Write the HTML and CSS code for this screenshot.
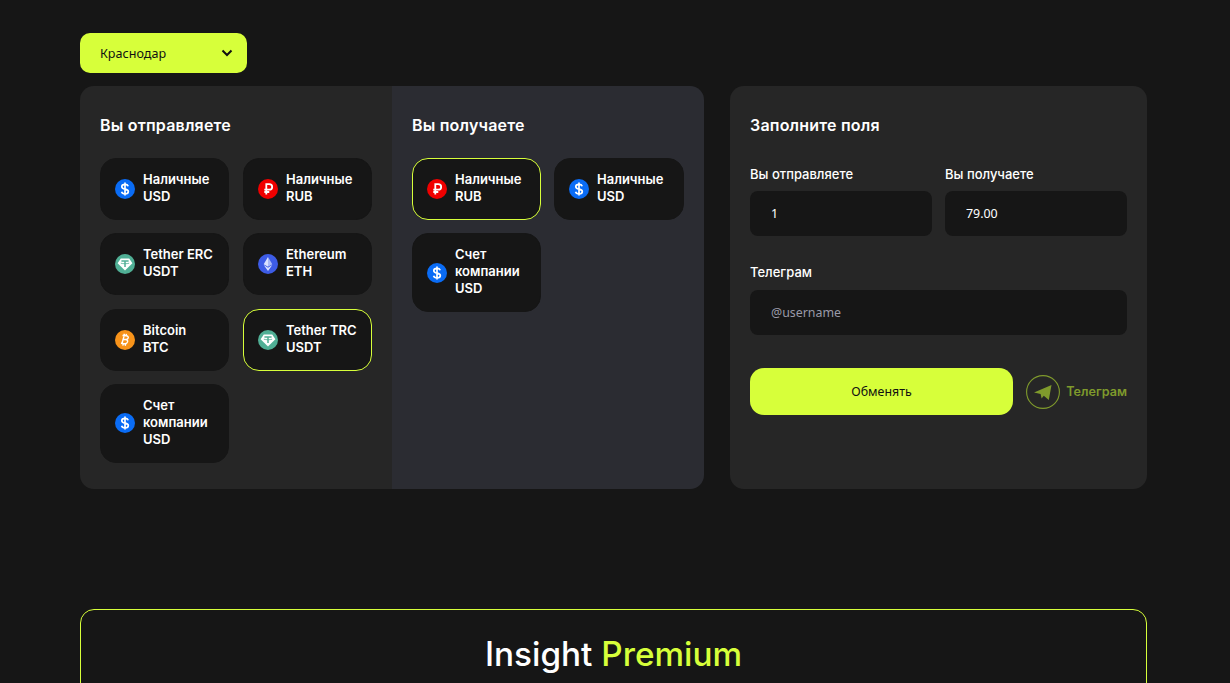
FILE: index.html
```html
<!DOCTYPE html>
<html>
<head>
    <meta charset="UTF-8" />
    <title>Обмен</title>
    <link rel="stylesheet" href="styles.css">
</head>
<body>
    <svg class="defs" width="0" height="0">
        <symbol id="i-usd" viewBox="0 0 20 20">
            <circle cx="10" cy="10" r="10" fill="#0a6cf5"/>
            <path d="M13.2 7.2C12.8 6 11.6 5.3 10 5.3c-1.900 0-3.200 1-3.200 2.400 0 3.300 6.500 1.500 6.500 4.700 0 1.400-1.400 2.400-3.300 2.400-1.700 0-3-.8-3.400-2.100M10 3.400v13.200" fill="none" stroke="#fff" stroke-width="1.700"/>
        </symbol>
        <symbol id="i-rub" viewBox="0 0 20 20">
            <circle cx="10" cy="10" r="10" fill="#f00000"/>
            <path d="M8.300 15.500V5.200h2.900c1.800 0 3 1.100 3 2.700s-1.200 2.800-3 2.800H6.300M6.300 13h5" fill="none" stroke="#fff" stroke-width="1.800"/>
        </symbol>
        <symbol id="i-usdt" viewBox="0 0 20 20">
            <circle cx="10" cy="10" r="10" fill="#50af95"/>
            <path d="M5.800 4.600h8.400l3.200 4.600L10 16.600 2.600 9.200z" fill="#fff"/>
            <path d="M6.400 6.900h7.200M10 6.900v6" fill="none" stroke="#50af95" stroke-width="1.500"/>
            <path d="M5.800 9.200c2.400.7 6 .7 8.400 0" fill="none" stroke="#50af95" stroke-width=".8"/>
        </symbol>
        <symbol id="i-eth" viewBox="0 0 20 20">
            <circle cx="10" cy="10" r="10" fill="#3d5ce6"/>
            <path d="M10 3l-4.300 7.200L10 12.800z" fill="#dbe3ff"/>
            <path d="M10 3l4.300 7.200L10 12.800z" fill="#a9baf7"/>
            <path d="M5.700 11.100L10 17l4.300-5.900L10 13.700z" fill="#dbe3ff"/>
        </symbol>
        <symbol id="i-btc" viewBox="0 0 20 20">
            <circle cx="10" cy="10" r="10" fill="#f7931a"/>
            <path d="M7.200 5.700h3.700c1.500 0 2.400.8 2.200 2-.2 1.100-1 1.800-2.500 1.800H7.600m2.800 0c1.700 0 2.600.9 2.300 2.200-.3 1.300-1.300 2-2.900 2H6.200M8.900 5.700l-1.700 8M9 3.800l-.4 1.900m2.400-1.900l-.4 1.900m-2 8l-.4 2m2.800-2l-.4 2" fill="none" stroke="#fff" stroke-width="1.400" transform="rotate(4 10 10)"/>
        </symbol>
    </svg>

    <div class="wrap">
        <div class="city">
            <span>Краснодар</span>
            <svg class="city-arrow" width="12" height="8" viewBox="0 0 12 8"><path d="M1.500 1.500L6 6l4.500-4.500" fill="none" stroke="#111" stroke-width="2"/></svg>
        </div>

        <div class="row">
            <div class="pairs">
                <div class="pane">
                    <h3>Вы отправляете</h3>
                    <div class="items">
                        <div class="item"><svg class="ico"><use href="#i-usd"/></svg><span>Наличные<br>USD</span></div>
                        <div class="item"><svg class="ico"><use href="#i-rub"/></svg><span>Наличные<br>RUB</span></div>
                        <div class="item"><svg class="ico"><use href="#i-usdt"/></svg><span>Tether ERC<br>USDT</span></div>
                        <div class="item"><svg class="ico"><use href="#i-eth"/></svg><span>Ethereum<br>ETH</span></div>
                        <div class="item"><svg class="ico"><use href="#i-btc"/></svg><span>Bitcoin<br>BTC</span></div>
                        <div class="item active"><svg class="ico"><use href="#i-usdt"/></svg><span>Tether TRC<br>USDT</span></div>
                        <div class="item"><svg class="ico"><use href="#i-usd"/></svg><span>Счет<br>компании<br>USD</span></div>
                    </div>
                </div>
                <div class="pane pane-right">
                    <h3>Вы получаете</h3>
                    <div class="items">
                        <div class="item active"><svg class="ico"><use href="#i-rub"/></svg><span>Наличные<br>RUB</span></div>
                        <div class="item"><svg class="ico"><use href="#i-usd"/></svg><span>Наличные<br>USD</span></div>
                        <div class="item"><svg class="ico"><use href="#i-usd"/></svg><span>Счет<br>компании<br>USD</span></div>
                    </div>
                </div>
            </div>

            <div class="form">
                <h3>Заполните поля</h3>
                <div class="fields">
                    <div class="field">
                        <label>Вы отправляете</label>
                        <input type="text" value="1">
                    </div>
                    <div class="field">
                        <label>Вы получаете</label>
                        <input type="text" value="79.00">
                    </div>
                    <div class="field field-wide">
                        <label>Телеграм</label>
                        <input type="text" placeholder="@username">
                    </div>
                </div>
                <div class="actions">
                    <button>Обменять</button>
                    <a class="tg" href="#">
                        <svg width="34" height="34" viewBox="0 0 34 34">
                            <circle cx="17" cy="17" r="16.400" fill="none" stroke="#7f9a2c" stroke-width="1.100"/>
                            <path d="M8 17.500L25.500 10l-2.700 15-5-4.300-2.200 2.800-1-4.500z" fill="#7f9a2c"/>
                        </svg>
                        <span>Телеграм</span>
                    </a>
                </div>
            </div>
        </div>

        <div class="premium">
            <h2>Insight <span>Premium</span></h2>
        </div>
    </div>
</body>
</html>
```

FILE: styles.css
```css
body {
    margin: 0;
    background-color: #161616;
    color: #fff;
    font-family: Inter, "Noto Sans", sans-serif;
    overflow: hidden;
    height: 683px;
}
.defs {
    display: none;
}
.wrap {
    width: 1067px;
    margin: 0 0 0 80px;
    padding-top: 33px;
}
.city {
    width: 167px;
    height: 40px;
    box-sizing: border-box;
    padding: 0 14px 0 20px;
    display: flex;
    align-items: center;
    justify-content: space-between;
    background-color: #d7ff3a;
    border-radius: 10px;
    color: #111;
    font-family: "Noto Sans", sans-serif;
    font-size: 12.600px;
}
.row {
    display: flex;
    justify-content: space-between;
    margin-top: 13px;
}
.pairs {
    display: flex;
    width: 624px;
    height: 403px;
    border-radius: 14px;
    overflow: hidden;
}
.pane {
    width: 312px;
    box-sizing: border-box;
    padding: 30px 20px 0;
    background-color: #262626;
}
.pane-right {
    background-color: #2b2c32;
}
h3 {
    margin: 0;
    font-size: 16px;
    line-height: 19px;
    font-weight: 600;
    letter-spacing: .2px;
}
.items {
    display: grid;
    grid-template-columns: 129px 129px;
    column-gap: 14px;
    row-gap: 13.300px;
    align-items: start;
    margin-top: 23px;
}
.pane-right .items {
    grid-template-columns: 129px 130px;
    column-gap: 13px;
}
.item {
    display: flex;
    align-items: center;
    gap: 8px;
    min-height: 62px;
    box-sizing: border-box;
    padding: 12px 8px 12px 14px;
    background-color: #161616;
    border: 1px solid #161616;
    border-radius: 16px;
    font-size: 13px;
    line-height: 17px;
    font-weight: 600;
}
.item span {
    margin-bottom: 2px;
}
.item.active {
    border-color: #d7ff3a;
}
.ico {
    width: 20px;
    height: 20px;
    flex: none;
}
.form {
    width: 417px;
    height: 403px;
    box-sizing: border-box;
    padding: 30px 20px 0;
    background-color: #262626;
    border-radius: 14px;
}
.fields {
    display: grid;
    grid-template-columns: 182px 182px;
    column-gap: 13px;
    row-gap: 28px;
    margin-top: 31px;
}
.field-wide {
    grid-column: 1 / 3;
}
label {
    display: block;
    margin-bottom: 8px;
    font-size: 13px;
    line-height: 17px;
    font-weight: 500;
}
.field-wide label {
    margin-bottom: 9px;
}
input {
    display: block;
    width: 100%;
    height: 45px;
    box-sizing: border-box;
    padding: 0 21px;
    border: none;
    border-radius: 8px;
    background-color: #161616;
    color: #fff;
    font-family: "Noto Sans", sans-serif;
    font-size: 12.400px;
}
input::placeholder {
    color: #9a9aa8;
}
.actions {
    display: flex;
    align-items: center;
    justify-content: space-between;
    margin-top: 33px;
}
button {
    width: 263px;
    height: 47px;
    border: none;
    border-radius: 14px;
    background-color: #d7ff3a;
    color: #111;
    font-family: "Noto Sans", sans-serif;
    font-size: 12.400px;
}
.tg {
    display: flex;
    align-items: center;
    gap: 6px;
    color: #7f9a2c;
    font-size: 12.600px;
    font-weight: 600;
    text-decoration: none;
}
.premium {
    height: 200px;
    box-sizing: border-box;
    margin-top: 120px;
    padding-top: 24px;
    border: 1px solid #d7ff3a;
    border-radius: 14px;
    text-align: center;
}
h2 {
    margin: 0;
    font-size: 33.300px;
    line-height: 40px;
    font-weight: 500;
}
h2 span {
    color: #d7ff3a;
}
```
